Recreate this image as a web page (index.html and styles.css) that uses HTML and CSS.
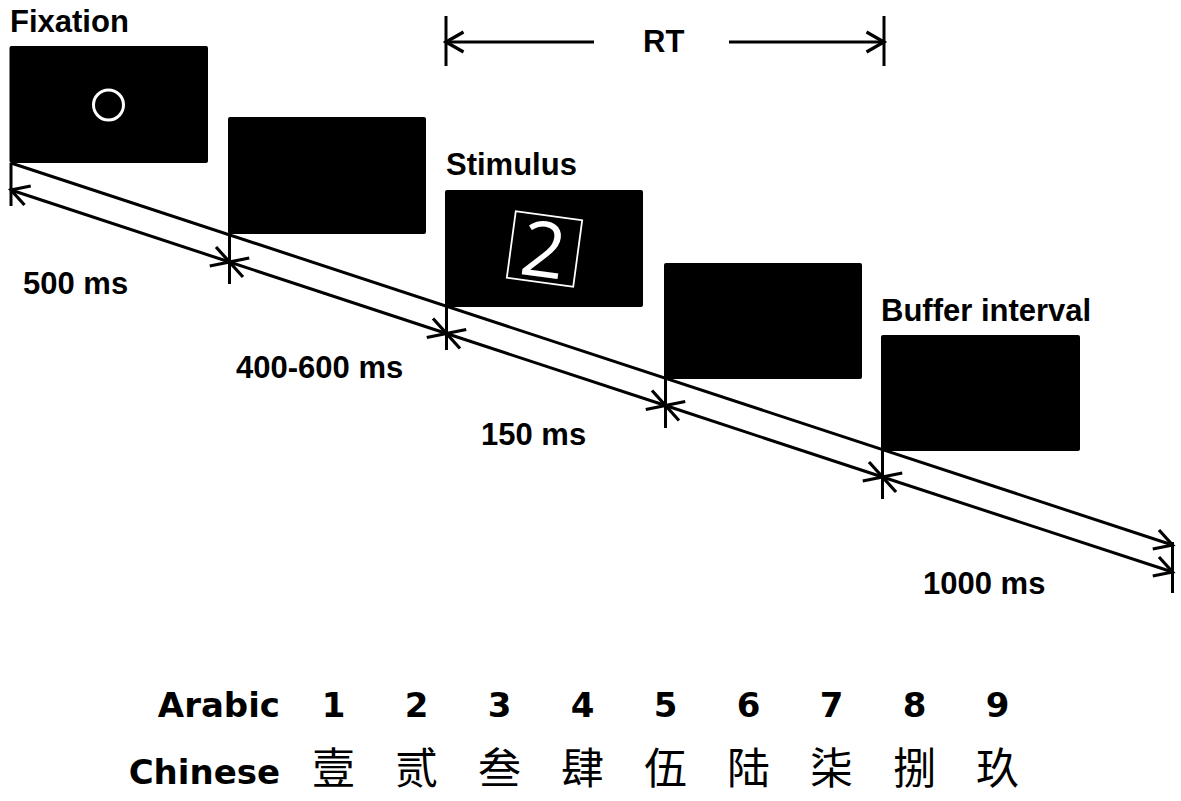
FILE: index.html
```html
<!DOCTYPE html>
<html lang="en">
<head>
<meta charset="utf-8">
<title>Trial procedure</title>
<link rel="stylesheet" href="styles.css">
</head>
<body>
<main class="figure">
  <svg class="diagram" width="1181" height="660" viewBox="0 0 1181 660" xmlns="http://www.w3.org/2000/svg">
    <defs>
      <marker id="head" markerUnits="userSpaceOnUse" markerWidth="24" markerHeight="24" viewBox="0 0 24 24" refX="20.5" refY="12" orient="auto-start-reverse">
        <path class="head" d="M3,2 L20.5,12 L3,22"/>
      </marker>
    </defs>

    <!-- screens -->
    <rect class="screen" x="9.5" y="46" width="198.5" height="117" rx="2"/>
    <rect class="screen" x="228" y="117" width="198" height="117" rx="2"/>
    <rect class="screen" x="445" y="190" width="198" height="117" rx="2"/>
    <rect class="screen" x="664" y="263" width="198" height="116" rx="2"/>
    <rect class="screen" x="881" y="335" width="199" height="116" rx="2"/>

    <!-- fixation circle -->
    <circle class="fix" cx="108.5" cy="105" r="15"/>

    <!-- stimulus -->
    <g transform="translate(544.5 249) rotate(7.7)">
      <rect class="frame" x="-33.5" y="-33.5" width="67" height="67"/>
      <text class="digit" x="-1" y="28">2</text>
    </g>

    <!-- timeline -->
    <line class="ln" x1="11" y1="163" x2="1172.5" y2="545" marker-end="url(#head)"/>

    <!-- duration arrows -->
    <line class="ln" x1="11" y1="190" x2="229.5" y2="262" marker-start="url(#head)" marker-end="url(#head)"/>
    <line class="ln" x1="229.5" y1="262" x2="446.5" y2="333.5" marker-start="url(#head)" marker-end="url(#head)"/>
    <line class="ln" x1="446.5" y1="333.5" x2="665.5" y2="405.5" marker-start="url(#head)" marker-end="url(#head)"/>
    <line class="ln" x1="665.5" y1="405.5" x2="882.5" y2="477" marker-start="url(#head)" marker-end="url(#head)"/>
    <line class="ln" x1="882.5" y1="477" x2="1172.5" y2="572" marker-start="url(#head)" marker-end="url(#head)"/>

    <!-- ticks -->
    <line class="ln" x1="11" y1="163" x2="11" y2="206"/>
    <line class="ln" x1="229.5" y1="234" x2="229.5" y2="284"/>
    <line class="ln" x1="446.5" y1="307" x2="446.5" y2="350"/>
    <line class="ln" x1="665.5" y1="379" x2="665.5" y2="428"/>
    <line class="ln" x1="882.5" y1="451" x2="882.5" y2="499"/>
    <line class="ln" x1="1172.5" y1="542" x2="1172.5" y2="593"/>

    <!-- RT -->
    <line class="ln" x1="446" y1="16" x2="446" y2="66"/>
    <line class="ln" x1="884" y1="16" x2="884" y2="66"/>
    <line class="ln" x1="446" y1="42" x2="594" y2="42" marker-start="url(#head)"/>
    <line class="ln" x1="729" y1="42" x2="884" y2="42" marker-end="url(#head)"/>

    <!-- labels -->
    <text class="lbl" x="10" y="32">Fixation</text>
    <text class="lbl" x="643" y="52">RT</text>
    <text class="lbl" x="446" y="175">Stimulus</text>
    <text class="lbl" x="23" y="294">500 ms</text>
    <text class="lbl" x="236" y="378">400-600 ms</text>
    <text class="lbl" x="481" y="445">150 ms</text>
    <text class="lbl" x="881" y="321">Buffer interval</text>
    <text class="lbl" x="923" y="594">1000 ms</text>
  </svg>

  <section class="numerals">
    <div class="label">Arabic</div>
    <div class="num">1</div><div class="num">2</div><div class="num">3</div>
    <div class="num">4</div><div class="num">5</div><div class="num">6</div>
    <div class="num">7</div><div class="num">8</div><div class="num">9</div>

    <div class="label">Chinese</div>
    <div class="han">壹</div><div class="han">贰</div><div class="han">叁</div>
    <div class="han">肆</div><div class="han">伍</div><div class="han">陆</div>
    <div class="han">柒</div><div class="han">捌</div><div class="han">玖</div>
  </section>
</main>
</body>
</html>
```

FILE: styles.css
```css
html, body {
  margin: 0;
  padding: 0;
  background: #ffffff;
}

body {
  width: 1181px;
  height: 801px;
  overflow: hidden;
  font-family: "Liberation Sans", Arial, sans-serif;
  color: #000;
}

.figure {
  display: flex;
  flex-direction: column;
}

.diagram {
  display: block;
}

.screen {
  fill: #000;
}

.fix {
  fill: none;
  stroke: #fff;
  stroke-width: 3;
}

.frame {
  fill: none;
  stroke: #fff;
  stroke-width: 1.8;
}

.digit {
  fill: #fff;
  font-family: "Open Sans", "Noto Sans", sans-serif;
  font-weight: 400;
  font-size: 77px;
  text-anchor: middle;
}

.ln {
  stroke: #000;
  stroke-width: 3;
  fill: none;
}

.head {
  fill: none;
  stroke: #000;
  stroke-width: 3.2;
  stroke-linejoin: miter;
}

.lbl {
  fill: #000;
  font-family: "Liberation Sans", Arial, sans-serif;
  font-weight: 700;
  font-size: 31px;
}

.numerals {
  margin-top: 28px;
  display: grid;
  grid-template-columns: 292px repeat(9, 83px);
  grid-template-rows: 34px 42px;
  row-gap: 22px;
  align-items: baseline;
}

.label,
.num {
  font-family: "DejaVu Sans", sans-serif;
  font-weight: 700;
  font-size: 34px;
  line-height: 1;
}

.label {
  text-align: right;
  padding-right: 12px;
}

.num {
  text-align: center;
}

.han {
  font-family: "Noto Sans CJK SC", "Noto Sans CJK TC", sans-serif;
  font-weight: 400;
  font-size: 43px;
  line-height: 1;
  text-align: center;
}
```
